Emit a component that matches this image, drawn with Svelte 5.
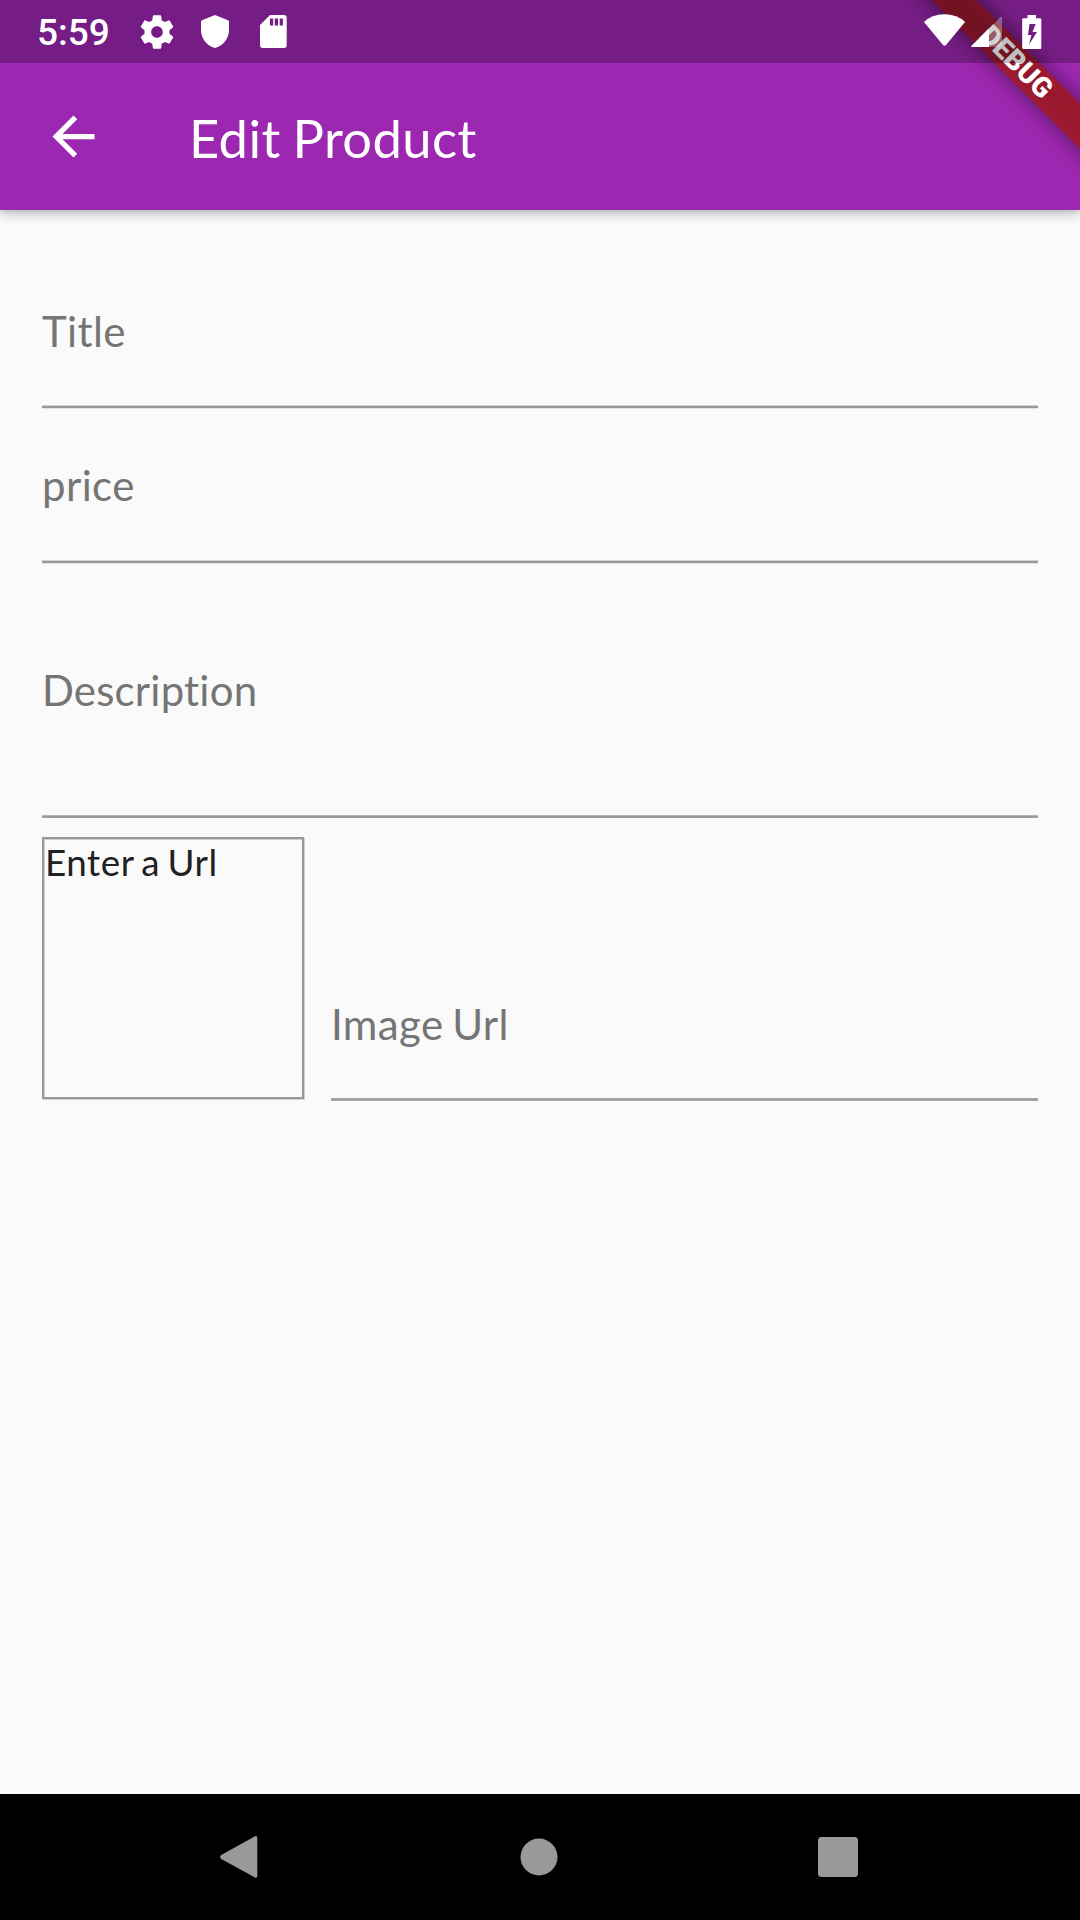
<script>
  const fields = [
    { label: 'Title', kind: 'title' },
    { label: 'price', kind: 'price' },
    { label: 'Description', kind: 'description' },
  ];
</script>

<div class="screen">
  <header class="top">
    <div class="status">
      <span class="clock">5:59</span>
      <svg class="gear" width="40" height="40" viewBox="0 0 24 24">
        <path d="M19.43 12.98c.04-.32.07-.64.07-.98s-.03-.66-.07-.98l2.11-1.65c.19-.15.24-.42.12-.64l-2-3.46c-.12-.22-.39-.3-.61-.22l-2.49 1c-.52-.4-1.08-.73-1.69-.98l-.38-2.65C14.46 2.18 14.25 2 14 2h-4c-.25 0-.46.18-.49.42l-.38 2.65c-.61.25-1.17.59-1.69.98l-2.49-1c-.23-.09-.49 0-.61.22l-2 3.46c-.13.22-.07.49.12.64l2.11 1.65c-.04.32-.07.65-.07.98s.03.66.07.98l-2.11 1.65c-.19.15-.24.42-.12.64l2 3.46c.12.22.39.3.61.22l2.49-1c.52.4 1.08.73 1.69.98l.38 2.65c.03.24.24.42.49.42h4c.25 0 .46-.18.49-.42l.38-2.65c.61-.25 1.17-.59 1.69-.98l2.49 1c.23.09.49 0 .61-.22l2-3.46c.12-.22.07-.49-.12-.64l-2.11-1.65zM12 15.5c-1.93 0-3.5-1.57-3.5-3.5s1.57-3.5 3.5-3.5 3.5 1.57 3.5 3.5-1.57 3.5-3.5 3.5z" />
      </svg>
      <svg class="shield" width="28" height="33" viewBox="0 0 28 33">
        <path d="M14 0L27 5.2Q28 5.6 28 7V15C28 23.5 22 31 14 33C6 31 0 23.5 0 15V7Q0 5.6 1 5.2Z" />
      </svg>
      <svg class="card" width="27" height="33" viewBox="0 0 27 33">
        <path fill-rule="evenodd" d="M10 0H24Q26.7 0 26.7 2.700V30.300Q26.700 33 24 33H2.700Q0 33 0 30.300V10ZM10 3.500V10.500H13.200V3.500ZM14.800 3.500V10.500H18V3.500ZM19.700 3.500V10.500H22.900V3.500Z" />
      </svg>
      <span class="spacer"></span>
      <svg class="wifi" width="41" height="33" viewBox="0 0 41 33">
        <path d="M0 8Q8 0.300 20.500 0.300T41 8L22 31Q20.500 32.500 19 31Z" />
      </svg>
      <svg class="signal" width="32" height="32" viewBox="0 0 32 32">
        <path opacity=".3" d="M18 13.500L29.500 1Q31 0 31 2V31H18Z" />
        <path d="M18 12.500V31H1Q-.5 31 .5 29.700Z" />
      </svg>
      <svg class="battery" width="20" height="34" viewBox="0 0 20 34">
        <path fill-rule="evenodd" d="M5.500 0H14V3.300H18Q19.300 3.300 19.300 4.600V32.700Q19.300 34 18 34H1.500Q.2 34 .2 32.700V4.600Q.2 3.300 1.500 3.300H5.500ZM7.500 9L6 20H9.500L7 29.500L15 17H10.500L13.700 9Z" />
      </svg>
    </div>
    <div class="appbar">
      <svg class="back" width="63" height="63" viewBox="0 0 24 24">
        <path d="M20 11H7.830l5.590-5.590L12 4l-8 8 8 8 1.410-1.410L7.830 13H20v-2z" />
      </svg>
      <h1>Edit Product</h1>
    </div>
    <div class="corner">
      <div class="glow"></div>
      <div class="banner">DEBUG</div>
      <div class="scrim"></div>
    </div>
  </header>

  <main>
    {#each fields as field}
      <div class="field {field.kind}">
        <span class="label">{field.label}</span>
      </div>
    {/each}
    <div class="image-row">
      <div class="preview">Enter a Url</div>
      <div class="field url"><span class="label">Image Url</span></div>
    </div>
  </main>

  <nav>
    <svg width="38" height="42" viewBox="0 0 38 42">
      <path d="M35 .3Q37.300 -.5 37.300 2V40Q37.300 42.500 35 41.500L1.200 23Q-1 21 1.200 19Z" />
    </svg>
    <svg class="home" width="38" height="38" viewBox="0 0 38 38"><circle cx="19" cy="19" r="18.500" /></svg>
    <svg width="40" height="40" viewBox="0 0 40 40"><rect width="40" height="40" rx="3.500" /></svg>
  </nav>
</div>

<style>
  :global(body) {
    margin: 0;
  }
  .screen {
    width: 1080px;
    height: 1920px;
    display: flex;
    flex-direction: column;
    background: #fafafa;
    font-family: Lato, sans-serif;
    font-variant-ligatures: none;
    overflow: hidden;
  }
  svg {
    display: block;
    flex: none;
  }
  .top {
    position: relative;
    height: 210px;
    flex: none;
    background: #9c27b0;
    box-shadow: 0 4px 11px rgba(0, 0, 0, 0.24), 0 2px 4px rgba(0, 0, 0, 0.06);
  }
  .status {
    position: relative;
    z-index: 2;
    height: 63px;
    box-sizing: border-box;
    padding: 0 38px 0 37px;
    display: flex;
    align-items: center;
    fill: #fff;
    color: #fff;
  }
  .clock {
    width: 100px;
    font: 500 37px/64px Roboto, sans-serif;
    padding-top: 2px;
  }
  .shield {
    margin-left: 24px;
  }
  .card {
    margin-left: 31px;
  }
  .spacer {
    flex: 1;
  }
  .wifi {
    margin-top: -2px;
  }
  .signal {
    margin-left: 6px;
  }
  .battery {
    margin-left: 19px;
  }
  .appbar {
    height: 147px;
    display: flex;
    align-items: center;
    padding-left: 42px;
    fill: #fff;
    color: #fff;
  }
  h1 {
    margin: 2px 0 0 84px;
    font-size: 52.500px;
    font-weight: 400;
    line-height: 64px;
    letter-spacing: 0.400px;
    word-spacing: -2px;
  }
  /* Debug ribbon and the translucent status bar tint lie over the header. */
  .corner {
    position: absolute;
    inset: 0;
    overflow: hidden;
    z-index: 1;
  }
  .banner,
  .glow {
    position: absolute;
    left: 867px;
    top: 47px;
    width: 300px;
    height: 31.800px;
    transform: rotate(45deg);
  }
  .glow {
    background: rgba(0, 0, 0, 0.5);
    filter: blur(9.500px);
  }
  .banner {
    background: rgba(176, 26, 26, 0.740);
    color: #fff;
    font: 900 28px/32px Roboto, sans-serif;
    text-align: center;
    text-indent: -2px;
  }
  .scrim {
    height: 63px;
    position: relative;
    background: rgba(0, 0, 0, 0.25);
  }
  main {
    flex: 1;
    padding: 42px 42px 0;
  }
  .field {
    box-sizing: border-box;
    display: flex;
    background: linear-gradient(#d2d2d2 1px, #999 1px 3px, #e4e4e4 3px) bottom / 100% 4px no-repeat;
  }
  .label {
    font-size: 42px;
    line-height: 50px;
    letter-spacing: 0.400px;
    color: #757575;
  }
  .title {
    height: 157px;
    padding-top: 54px;
  }
  .price {
    height: 155px;
    padding-top: 51px;
  }
  .description {
    height: 254px;
    padding-top: 101px;
    background: linear-gradient(#b5b5b5 1px, #999 1px) bottom / 100% 3px no-repeat;
  }
  .description .label {
    letter-spacing: 0.200px;
  }
  .image-row {
    display: flex;
    align-items: flex-start;
    padding-top: 19px;
  }
  .preview {
    width: 262px;
    height: 262px;
    box-sizing: border-box;
    border: 2px solid #999;
    box-shadow: 1px 1px #cfcfcf, inset 1px 1px #cfcfcf;
    padding: 1px;
    color: #212121;
    font-size: 36.750px;
    line-height: 44px;
    letter-spacing: 0.550px;
    word-spacing: -2.500px;
  }
  .url {
    flex: 1;
    margin: 160px 0 0 27px;
    height: 104px;
    padding-top: 2px;
    background: linear-gradient(#a8a8a8 1px, #999 1px 2px, #a8a8a8 2px) bottom / 100% 3px no-repeat;
  }
  .url .label {
    word-spacing: -2.500px;
  }
  nav {
    height: 126px;
    flex: none;
    box-sizing: border-box;
    padding: 0 222px 0 220px;
    display: flex;
    align-items: center;
    justify-content: space-between;
    background: #000;
    fill: #999;
  }
  .home {
    margin-left: 2px;
  }
</style>
